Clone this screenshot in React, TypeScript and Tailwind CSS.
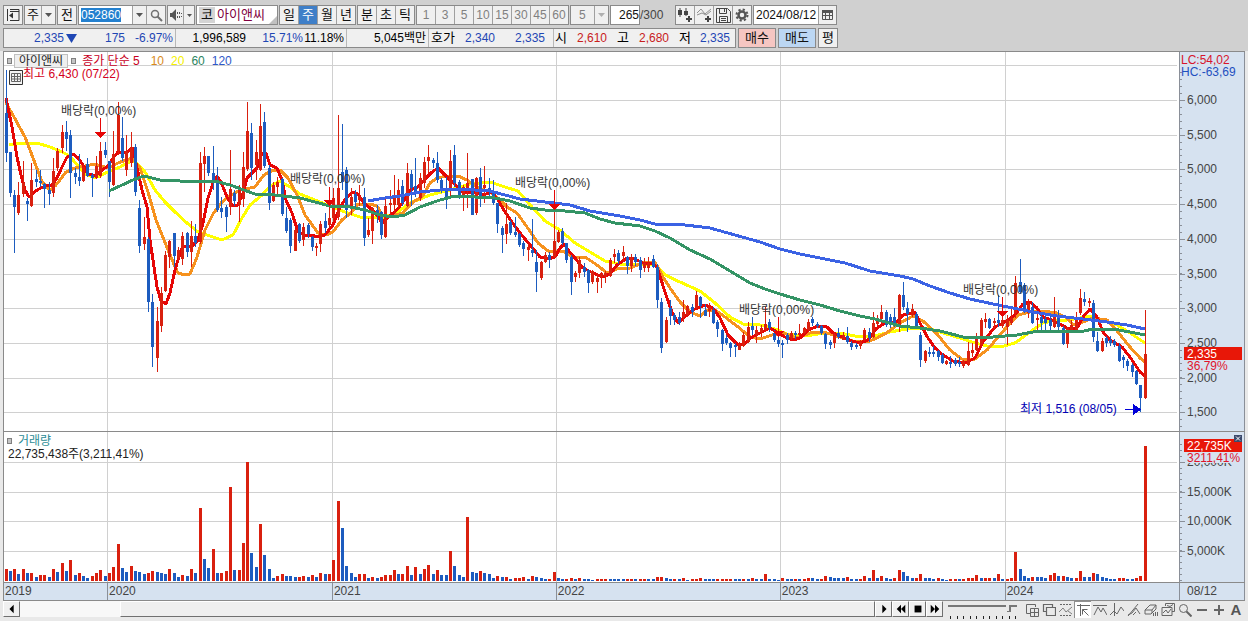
import type { ReactNode } from "react";
import clsx from "clsx";

const LEFT = 4;
const WIDTH = 1175;
const PITCH = 4.315;

const RED = "#d9200f";
const BLUE = "#1d5cbf";

const barX = (i: number) => Math.floor(5 + i * PITCH);
const pct = (x: number) => `${((x - LEFT) / WIDTH) * 100}%`;

// direction, high, body top, body bottom, low
const CANDLES = `
b70,113,153,162 b152,152,193,197 b190,195,207,253 r182,195,213,215 r161,183,194,197 b198,201,204,221 r163,180,206,207 b170,179,182,187
b170,181,183,187 b183,184,189,208 b182,190,194,205 r158,171,193,197 r148,151,168,171 r125,132,148,153 b121,132,139,151 b130,135,173,198
b168,173,177,184 b154,177,181,186 r165,167,181,182 b158,164,176,177 b173,175,178,197 r156,166,178,179 r142,151,176,178 b142,150,155,158
b161,161,182,197 r131,154,185,186 r102,115,151,155 b117,138,158,161 r135,151,170,176 r132,147,163,167 b144,147,192,196 b200,208,246,253
r217,237,244,250 b237,239,302,312 b294,302,347,367 r307,321,358,372 r287,293,326,332 r251,255,291,292 r240,241,257,268 b233,233,256,267
r247,250,258,261 r232,236,259,265 b232,233,252,257 r221,236,252,267 b224,236,243,247 r152,163,242,244 r147,156,164,192 b156,156,173,176
b146,173,182,190 b167,182,210,212 b197,208,212,218 b205,207,217,232 r150,189,207,215 b190,193,201,206 r185,187,205,222 r152,167,199,207
r102,131,169,171 b123,133,168,180 r140,152,165,180 r104,126,170,171 b112,122,166,168 b165,168,203,210 r182,185,201,202 r177,182,187,197
b178,179,214,216 b207,218,231,233 b218,220,246,253 r229,230,251,251 b223,224,241,243 r223,227,240,246 b223,225,234,238 b236,237,247,251
r243,246,248,256 r221,224,244,252 b213,221,228,233 r187,218,225,227 r188,198,218,222 r115,188,217,220 b124,172,182,190 b167,170,210,218
r188,197,209,215 b190,194,202,207 r185,197,200,206 b188,197,238,246 r218,230,235,237 r207,208,231,244 b205,210,215,223 b211,212,235,239
r197,206,237,238 r190,203,205,215 r175,195,205,213 r179,190,205,208 b180,186,203,206 r163,173,206,207 b170,174,188,206 b158,186,192,197
r173,178,198,201 r157,162,183,188 r145,157,161,173 b158,160,163,168 b152,163,180,183 b178,180,190,193 b177,190,197,209 r150,161,190,197
b145,155,183,187 b180,182,197,199 r185,187,198,211 r153,183,188,208 b179,179,215,215 r177,178,213,215 b168,177,197,207 r166,185,188,203
b178,188,192,197 b180,192,203,205 b203,203,224,233 b226,228,235,253 r203,224,234,244 b220,222,233,235 b217,232,235,237 b233,234,245,247
b241,243,249,256 r244,247,250,261 b219,250,253,257 b250,262,272,292 r261,262,278,280 r252,255,262,263 b252,255,260,268 r190,241,257,258
r230,232,242,243 b228,231,243,245 b243,243,260,263 b255,257,282,295 r271,273,277,282 r257,260,273,278 b263,267,272,277 b269,270,283,293
r270,271,282,284 r273,278,282,293 r272,273,277,288 r271,273,277,283 r258,260,276,277 r249,254,257,263 b250,253,261,264 r246,252,256,262
b256,257,266,274 r254,257,266,272 b254,257,262,266 b257,260,270,278 r258,263,268,272 r257,263,268,272 b255,259,267,268 b264,267,300,308
b298,302,348,353 r317,320,342,343 b300,308,316,325 b313,315,320,325 b312,317,323,325 r300,312,317,322 r305,306,315,317 b304,307,312,317
r291,295,308,309 b296,297,306,318 b304,310,316,316 r303,307,311,317 b307,310,323,324 b320,322,329,337 b329,330,344,351 b335,338,343,345
b342,343,348,357 b343,345,347,357 r342,344,350,350 r332,335,346,347 r322,327,342,343 b317,326,330,335 r326,330,335,343 r325,328,332,337
r307,324,330,332 b319,322,328,332 b330,333,340,342 b317,340,344,347 b340,343,345,358 b333,335,340,344 r331,333,338,340 b331,333,335,339
r324,333,335,337 r327,328,333,334 r319,322,330,331 b317,319,323,326 b322,324,326,328 b325,326,333,335 b333,334,344,349 b340,342,345,349
r333,334,343,348 b328,333,337,339 r332,335,340,340 b327,336,342,344 b341,343,347,350 b343,345,347,349 r340,342,346,349 r328,330,340,341
b328,332,338,342 r312,323,337,338 r315,319,324,326 r305,312,319,323 b310,312,325,327 b314,317,325,328 b308,317,326,327 r294,295,327,332
b282,295,307,310 b302,308,314,332 r304,309,315,317 b312,314,328,329 b332,335,360,367 r350,351,361,363 b347,352,354,357 b346,352,354,357
b350,351,357,361 b353,355,363,364 r360,361,364,365 b356,362,364,368 b358,360,364,366 b357,362,364,367 r360,361,366,368 r342,351,365,366
r343,350,353,357 r333,338,350,351 r318,320,345,347 r313,319,322,328 b318,319,328,329 r318,321,323,329 b295,320,323,327 r297,320,326,328
r315,320,327,345 r308,318,323,325 r276,283,313,318 b259,282,292,293 b283,285,312,313 r299,303,313,318 b302,307,323,324 r313,318,320,330
b315,317,323,333 b316,319,323,332 b316,320,326,332 r297,317,327,328 b310,315,327,330 b326,328,344,345 r327,328,344,348 r320,325,330,333
r312,320,330,333 r289,298,313,315 b292,299,302,306 r298,301,303,307 b300,303,337,342 b332,341,351,352 r338,341,351,352 b336,338,343,347
b336,340,343,346 b339,341,345,347 b343,346,361,362 b355,357,360,368 b359,361,366,371 b363,365,372,377 b370,371,384,385 b385,385,398,412
r310,354,398,399
`
  .trim()
  .split(/\s+/)
  .map((s) => {
    const [high, top, bottom, low] = s.slice(1).split(",").map(Number);
    return { up: s[0] === "r", high, top, bottom, low };
  });

const VOLUMES = `
r12 b10 r12 b7 r12 b8 r8 b4 r6 r6 b4 r12 b9 r18 b10 r21 b6 r8 b5 b3 r5 r8 r11 b5 r8 r14 r37 b13 b9 r15
b10 b9 b7 r8 r10 b9 b8 b7 r12 b8 b4 r6 b5 r12 b8 r73 b22 b13 r32 b8 r8 r10 r94 b11 r11 r38 r119 b28 b14 r57
b26 b12 b3 r5 r7 b5 b5 b4 r4 r5 b4 r6 b4 r8 b7 r7 r21 r80 b53 b15 b8 b4 r7 r7 b3 r4 b3 r4 r6 r6
r11 b7 r7 r15 b6 r14 b7 r12 r16 b7 r11 b6 b6 r30 b15 b6 b4 r64 b9 b8 r10 b8 b7 b3 r5 b4 r4 b2 r3 r3
r4 b2 r5 b4 b3 b2 r2 r9 b3 b2 r2 r3 b2 r3 b2 b2 b1 r2 r2 r2 b2 b2 b2 b2 r2 r2 b2 r2 r2 b2
b2 r4 r4 b3 b2 r2 b2 r3 b1 r2 r2 r3 b2 b2 b2 r2 r2 r2 r2 b2 b2 r2 b2 r3 b2 b2 r7 b2 b2 b1
r3 b2 b2 r2 b2 r2 r3 b3 b2 r2 r5 b4 b3 b3 b3 r4 b2 b2 r2 r5 b3 r11 b3 r5 b3 b2 r3 r11 b9 b5
b3 r3 r7 b3 b3 b2 r3 b2 b1 r2 r2 b2 r2 r3 r3 r6 b3 r3 r3 b3 r7 b2 r2 r3 r29 b12 b5 b3 r4 b4
b4 b3 r6 r8 b5 r5 b4 b3 r3 r10 b4 b4 r8 b7 b4 b3 b2 b2 r3 r3 b2 b2 r3 r5 r135
`
  .trim()
  .split(/\s+/)
  .map((s) => ({ up: s[0] === "r", h: Number(s.slice(1)) }));

const AVERAGES = [
  {
    color: "#ffff00",
    points:
      "9,145 20,143 37,143 50,147 62,152 70,156 78,166 85,174 95,178 108,172 120,167 133,160 145,172 155,190 165,202 175,212 187,223 198,232 210,236 222,240 233,235 242,218 250,205 262,195 270,186 280,181 290,187 300,194 315,200 330,206 345,212 360,217 380,218 395,214 410,203 430,195 450,190 470,184 490,182 505,187 518,191 530,205 545,221 560,230 575,243 590,252 605,261 620,264 640,264 655,265 667,276 680,282 700,291 715,303 730,317 743,324 760,325 775,329 787,334 805,336 825,333 840,333 855,336 870,337 890,332 912,328 927,328 943,333 960,338 975,343 987,346 1000,347 1015,343 1030,332 1043,323 1057,320 1067,320 1080,318 1090,316 1103,320 1117,325 1130,333 1145,343",
  },
  {
    color: "#f6921e",
    points:
      "6,103 14,117 25,137 33,158 42,182 50,190 56,185 66,172 75,168 85,166 95,164 108,168 118,163 132,158 140,168 148,192 156,220 166,245 173,262 178,273 185,275 190,274 197,257 205,230 213,214 222,202 230,196 240,190 255,187 264,175 273,170 280,170 288,178 297,195 305,215 318,233 326,235 333,232 342,220 352,212 358,204 370,204 377,206 382,215 388,217 403,213 413,202 422,197 430,183 437,178 447,176 458,176 467,180 477,187 490,192 498,198 507,207 517,213 527,227 538,243 548,251 563,251 573,257 585,257 597,265 607,273 617,269 630,268 643,263 655,262 663,277 670,288 680,302 690,312 700,316 707,310 715,310 725,317 737,326 750,337 760,339 772,335 783,333 797,338 810,333 823,332 840,337 853,341 867,342 877,338 888,332 900,323 913,316 923,321 937,334 950,350 962,359 975,359 987,350 1000,335 1010,323 1018,315 1030,312 1043,311 1057,313 1067,318 1073,325 1083,322 1093,318 1107,320 1118,332 1130,347 1140,358 1145,362",
  },
  {
    color: "#e60606",
    points:
      "6,98 12,127 17,157 21,175 25,190 29,197 37,190 45,186 52,185 57,178 62,167 67,157 73,154 78,158 83,165 88,174 95,176 102,170 108,166 113,158 118,152 125,153 133,148 137,168 142,190 147,207 150,240 153,260 157,287 161,301 166,304 170,293 175,270 180,253 183,246 192,246 198,240 203,223 208,198 213,183 217,176 221,182 227,197 232,205 238,205 243,193 247,178 252,173 257,168 262,153 266,153 270,165 277,168 282,180 286,200 292,213 298,232 305,235 312,235 317,237 325,235 333,225 340,207 347,197 353,192 358,194 363,202 370,208 377,215 382,223 388,217 397,210 403,202 410,190 418,187 425,179 432,172 438,168 443,173 450,180 458,187 463,192 473,192 483,195 492,192 498,200 505,212 512,222 520,233 530,245 540,257 548,259 555,257 560,248 564,244 568,250 575,258 583,268 593,273 603,277 610,274 617,265 627,258 635,259 643,263 652,264 657,267 665,292 672,312 678,323 687,315 695,309 705,305 713,308 720,318 728,335 737,344 743,345 752,337 762,332 770,328 777,332 785,337 793,340 800,338 808,330 818,326 827,327 833,333 842,337 852,341 860,343 868,340 877,328 885,323 897,322 903,315 915,312 920,323 928,338 935,348 943,355 953,361 965,363 975,358 983,342 995,327 1005,322 1015,315 1023,304 1030,302 1037,308 1043,317 1052,320 1058,323 1067,328 1077,328 1083,317 1090,309 1097,317 1103,332 1110,340 1122,347 1130,357 1140,372 1145,376",
  },
  {
    color: "#349465",
    points:
      "109,191 120,186 133,180 144,176 160,180 180,181 200,182 215,181 230,185 255,194 275,195 300,198 315,202 330,206 350,207 365,210 380,215 393,217 405,215 420,207 440,200 455,196 475,197 495,198 510,201 530,208 545,210 565,211 585,213 600,219 615,223 640,226 655,231 670,238 690,250 710,259 730,271 750,283 765,289 780,294 800,300 820,305 840,311 860,316 875,319 900,326 920,328 940,331 967,338 993,337 1017,335 1033,332 1060,331 1080,332 1093,329 1113,329 1130,332 1145,335",
  },
  {
    color: "#3b62e4",
    points:
      "368,201 385,198 400,196 420,192 440,190 455,189 475,190 490,191 505,195 520,199 545,202 570,205 590,211 620,216 640,220 655,224 685,225 710,228 735,235 760,242 780,249 800,254 820,258 845,263 870,271 900,276 913,279 930,286 950,293 970,299 993,304 1013,308 1033,312 1057,316 1083,319 1107,322 1127,325 1145,329",
  },
];

const YEAR_LINES = [107, 332, 556, 780, 1005];
const PRICE_LINES = [65, 100, 135, 169, 204, 239, 274, 308, 343, 378, 412];
const VOLUME_LINES = [462, 492, 521, 551];

const EX_DIVIDENDS = [
  { x: 61, y: 111, mark: 100, from: 118, tip: 138 },
  { x: 290, y: 179, mark: 329, from: 187, tip: 206 },
  { x: 515, y: 183, mark: 554, from: 190, tip: 210 },
  { x: 739, y: 310, mark: 778, from: 317, tip: 337 },
  { x: 963, y: 290, mark: 1002, from: 297, tip: 317 },
];

const YEARS = [
  { label: "2019", span: 103 },
  { label: "2020", span: 225 },
  { label: "2021", span: 224 },
  { label: "2022", span: 224 },
  { label: "2023", span: 225 },
  { label: "2024", span: 174 },
];

function Group({ children, className }: { children: ReactNode; className?: string }) {
  return (
    <div
      className={clsx(
        "flex h-5 shrink-0 divide-x divide-[#a0a0a0] border border-[#8a8a8a] bg-[#f0f0f0]",
        className,
      )}
    >
      {children}
    </div>
  );
}

function ToolButton({
  children,
  label,
  active,
  muted,
}: {
  children: ReactNode;
  label?: string;
  active?: boolean;
  muted?: boolean;
}) {
  return (
    <button
      type="button"
      aria-label={label}
      className={clsx(
        "flex min-w-0 flex-1 items-center justify-center",
        active && "bg-[#3f7fc8] text-white",
        muted && "text-[#808080]",
      )}
    >
      {children}
    </button>
  );
}

function Caret({ className = "fill-[#555]" }: { className?: string }) {
  return (
    <svg width="7" height="4" viewBox="0 0 7 4" className={className}>
      <path d="M0 0h7L3.500 4z" />
    </svg>
  );
}

function DropDown({ label, value, muted, className }: { label: string; value: string; muted?: boolean; className: string }) {
  return (
    <div className={clsx("relative flex h-5 shrink-0 border border-[#8a8a8a] bg-[#f0f0f0]", className)}>
      <select
        aria-label={label}
        className={clsx("w-full appearance-none", muted ? "pl-2 text-[#808080]" : "pl-[2px] text-[13px]")}
      >
        <option>{value}</option>
      </select>
      <span className="pointer-events-none absolute inset-y-0 right-0 flex w-[14px] items-center justify-center border-l border-[#a0a0a0]">
        <Caret className={muted ? "fill-[#b0b0b0]" : "fill-[#555]"} />
      </span>
    </div>
  );
}

function Toolbar() {
  return (
    <div className="flex gap-px">
      <Group className="w-5">
        <ToolButton label="창 열기">
          <svg width="14" height="14" viewBox="0 0 14 14" fill="none" stroke="#333">
            <path d="M4 1.500h9v11H4M1.500 1v12M4 3.500h9" />
            <path d="M7 4.500v6L3 7.500z" fill="#333" stroke="none" />
          </svg>
        </ToolButton>
      </Group>
      <DropDown label="주기" value="주" className="w-8" />
      <Group className="w-5 text-[13px]">
        <ToolButton>전</ToolButton>
      </Group>
      <Group className="w-[88px]">
        <div className="w-[54px] shrink-0 bg-white p-[2px]">
          <input
            aria-label="종목코드"
            defaultValue="052860"
            className="block h-[14px] w-10 bg-[#2380cf] text-white outline-none"
          />
        </div>
        <ToolButton label="종목 목록">
          <Caret />
        </ToolButton>
        <div className="flex w-[18px]">
          <ToolButton label="종목 검색">
            <svg width="13" height="13" viewBox="0 0 13 13" fill="none" stroke="#707070">
              <circle cx="5" cy="5" r="3.500" strokeWidth="1.500" />
              <path d="M7.500 7.500l4.500 4.500" strokeWidth="2" />
            </svg>
          </ToolButton>
        </div>
      </Group>
      <Group className="w-7">
        <ToolButton label="소리">
          <svg width="14" height="12" viewBox="0 0 14 12" fill="#555">
            <path d="M1 4h2l4-4v12L3 8H1z" />
            <path d="M8 3h1v2H8zM8 7h1v2H8zM10 3h1v2h-1zM10 7h1v2h-1zM12 4h1v1h-1zM12 7h1v1h-1z" />
          </svg>
        </ToolButton>
        <div className="flex w-[10px]">
          <ToolButton label="소리 설정">
            <svg width="5" height="3" viewBox="0 0 5 3" fill="#555">
              <path d="M0 0h5L2.500 3z" />
            </svg>
          </ToolButton>
        </div>
      </Group>
      <div className="relative flex h-5 w-[82px] shrink-0 items-center border border-[#8a8a8a] bg-white text-[13px]">
        <span className="mx-[2px] flex h-4 w-4 items-center justify-center bg-[#d4d4d4]">코</span>
        <span className="text-[#800040]">아이앤씨</span>
        <svg width="8" height="8" viewBox="0 0 8 8" className="absolute right-0 bottom-0 fill-[#c0c0c0]">
          <path d="M8 0v8H0z" />
        </svg>
      </div>
      <Group className="w-[77px] text-[13px]">
        <ToolButton>일</ToolButton>
        <ToolButton active>주</ToolButton>
        <ToolButton>월</ToolButton>
        <ToolButton>년</ToolButton>
      </Group>
      <Group className="w-[58px] text-[13px]">
        <ToolButton>분</ToolButton>
        <ToolButton>초</ToolButton>
        <ToolButton>틱</ToolButton>
      </Group>
      <Group className="w-[153px]">
        {["1", "3", "5", "10", "15", "30", "45", "60"].map((n) => (
          <ToolButton key={n} muted>
            {n}
          </ToolButton>
        ))}
      </Group>
      <DropDown label="분 단위" value="5" muted className="w-[39px]" />
      <label className="flex items-center">
        <input
          aria-label="조회 개수"
          defaultValue="265"
          className="h-5 w-[30px] border border-[#8a8a8a] bg-white text-right outline-none"
        />
        <span className="w-[34px] text-[#444]">/300</span>
      </label>
      <Group className="w-[77px]">
        <ToolButton label="차트 유형 추가">
          <svg width="15" height="14" viewBox="0 0 15 14" fill="#444">
            <path d="M0 2h4v5H0zM1.500 0h1v9h-1zM6 3h4v4H6zM7.500 0h1v8h-1zM10 8h2v2h2v2h-2v2h-2v-2H8v-2h2z" />
          </svg>
        </ToolButton>
        <ToolButton label="지표 추가">
          <svg width="15" height="14" viewBox="0 0 15 14">
            <path d="M0 5l4-4 4 5 6-5M0 7l5-2 4 2 5-4" fill="none" stroke="#777" strokeWidth=".8" />
            <path d="M10 8h2v2h2v2h-2v2h-2v-2H8v-2h2z" fill="#444" />
          </svg>
        </ToolButton>
        <ToolButton label="저장">
          <svg width="15" height="15" viewBox="0 0 15 15" fill="none" stroke="#444">
            <path d="M.5.5h11l3 3v11H.5zM3.500.5v5h7v-5M8.500 1v3M3.500 14.500v-6h8v6M5 10.500h5M5 12.500h5" />
          </svg>
        </ToolButton>
        <ToolButton label="설정">
          <svg width="14" height="14" viewBox="0 0 14 14" fill="none" stroke="#555">
            <circle cx="7" cy="7" r="3.500" strokeWidth="2.500" />
            <circle cx="7" cy="7" r="5.500" strokeWidth="2" strokeDasharray="2.200 2.120" />
          </svg>
        </ToolButton>
      </Group>
      <div className="flex h-5 shrink-0 border border-[#8a8a8a] bg-[#f0f0f0]">
        <input aria-label="날짜" defaultValue="2024/08/12" className="w-16 bg-white pl-[2px] outline-none" />
        <div className="flex w-[18px] border-l border-[#a0a0a0]">
          <ToolButton label="달력">
            <svg width="11" height="10" viewBox="0 0 11 10" fill="none" stroke="#555">
              <path d="M.5 1.500h10v8H.5zM.5 5.500h10M3.500 3v6.500M7.500 3v6.500" />
              <path d="M0 0h11v3H0z" fill="#555" stroke="none" />
            </svg>
          </ToolButton>
        </div>
      </div>
    </div>
  );
}

function QuoteBar() {
  return (
    <div className="flex gap-[2px]">
      <div className="flex h-5 w-[733px] shrink-0 items-center border border-[#8a8a8a] bg-[#f0f0f0] text-right whitespace-nowrap text-black">
        <span className="w-[60px] text-[#1f47b4]">2,335</span>
        <svg width="11" height="9" viewBox="0 0 11 9" className="ml-[2px] fill-[#1f47b4]">
          <path d="M0 0h11L5.500 9z" />
        </svg>
        <span className="w-12 text-[#1f47b4]">175</span>
        <span className="w-12 text-[#1f47b4]">-6.97%</span>
        <span className="ml-[2px] h-full border-l border-[#b8b8b8]" />
        <span className="w-[70px]">1,996,589</span>
        <span className="w-[57px] text-[#1f47b4]">15.71%</span>
        <span className="w-[41px]">11.18%</span>
        <span className="ml-[2px] h-full border-l border-[#b8b8b8]" />
        <span className="w-[79px]">5,045백만</span>
        <span className="ml-[2px] h-full border-l border-[#b8b8b8]" />
        <span className="w-[26px] text-[13px]">호가</span>
        <span className="w-10 text-[#1f47b4]">2,340</span>
        <span className="w-[50px] text-[#1f47b4]">2,335</span>
        <span className="ml-2 h-full border-l border-[#b8b8b8]" />
        <span className="w-[13px] text-[13px]">시</span>
        <span className="w-10 text-[#c8201c]">2,610</span>
        <span className="w-[22px] text-[13px]">고</span>
        <span className="w-10 text-[#c8201c]">2,680</span>
        <span className="w-[22px] text-[13px]">저</span>
        <span className="w-[39px] text-[#1f47b4]">2,335</span>
      </div>
      <button type="button" className="h-5 w-[38px] border border-[#8a8a8a] bg-[#f6c6c2] text-[13px]">
        매수
      </button>
      <button type="button" className="h-5 w-[38px] border border-[#8a8a8a] bg-[#bcd7f3] text-[13px]">
        매도
      </button>
      <button type="button" className="h-5 w-5 border border-[#8a8a8a] bg-[#f0f0f0] text-[13px]">
        평
      </button>
    </div>
  );
}

function Marker() {
  return <span className="h-[6px] w-[5px] border border-[#808080] bg-[#c4c4c4]" />;
}

function PricePanel() {
  return (
    <div className="relative">
      <svg
        viewBox="4 52 1175 379"
        preserveAspectRatio="none"
        className="block h-[379px] w-full"
        shapeRendering="crispEdges"
      >
        <g fill="#d0d0d0">
          {PRICE_LINES.map((y) => (
            <rect key={y} x={LEFT} y={y} width={WIDTH - 2} height="1" />
          ))}
          {YEAR_LINES.map((x) => (
            <rect key={x} x={x} y="52" width="1" height="379" />
          ))}
        </g>
        {AVERAGES.slice(0, 3).map((a) => (
          <polyline key={a.color} points={a.points} fill="none" stroke={a.color} strokeWidth="3" strokeLinejoin="round" />
        ))}
        {CANDLES.map((c, i) => (
          <g key={i} fill={c.up ? RED : BLUE}>
            <rect x={barX(i) + 1} y={c.high} width="1" height={c.low - c.high} />
            <rect x={barX(i)} y={c.top} width="3" height={c.bottom - c.top} />
          </g>
        ))}
        {AVERAGES.slice(3).map((a) => (
          <polyline key={a.color} points={a.points} fill="none" stroke={a.color} strokeWidth="3" strokeLinejoin="round" />
        ))}
        {EX_DIVIDENDS.map((d) => (
          <g key={d.x} fill="#e60606">
            <rect x={d.mark} y={d.from} width="1" height={d.tip - d.from} />
            <path d={`M${d.mark - 5} ${d.tip - 6}h11l-5.500 6z`} />
          </g>
        ))}
        <path d="M8 74l4-4v3h10v2H12v3z" fill="#d40020" />
        <path d="M1125 409h8v-5l8 5.500-8 5.500v-5h-8z" fill="#0000d8" />
      </svg>

      <div className="absolute top-[2px] left-[3px] flex items-center whitespace-nowrap">
        <Marker />
        <span className="ml-[2px] h-[14px] border border-[#c0c0c0] bg-[#efefef] px-1 leading-3 text-[#222]">아이앤씨</span>
        <span className="ml-[3px] flex">
          <Marker />
        </span>
        <span className="ml-[6px] text-[#c8001e]">종가 단순 5</span>
        <span className="ml-[11px] text-[#d98a1c]">10</span>
        <span className="ml-[7px] text-[#f4f000]">20</span>
        <span className="ml-[7px] text-[#2c8460]">60</span>
        <span className="ml-[7px] text-[#3058c8]">120</span>
      </div>
      <span className="absolute top-[15px] left-[19px] text-[#d40020]">최고 6,430 (07/22)</span>
      <svg width="14" height="15" viewBox="0 0 14 15" className="absolute top-[18px] left-[5px]">
        <path d="M.5.5h13v14H.5z" fill="#f4f4f4" stroke="#333" />
        <path d="M2.500 3.500h9v8h-9zM2.500 6.500h9M2.500 9h9M5.500 3.500v8M8.500 3.500v8" fill="none" stroke="#666" />
      </svg>
      {EX_DIVIDENDS.map((d) => (
        <span
          key={d.x}
          className="absolute -translate-y-1/2 whitespace-nowrap text-[#333]"
          style={{ left: pct(d.x), top: d.y - 52 }}
        >
          배당락(0,00%)
        </span>
      ))}
      <span
        className="absolute -translate-y-1/2 whitespace-nowrap text-[#0000b4]"
        style={{ left: pct(1020), top: 409 - 52 }}
      >
        최저 1,516 (08/05)
      </span>
    </div>
  );
}

function VolumePanel() {
  return (
    <div className="relative">
      <svg
        viewBox="4 432 1175 150"
        preserveAspectRatio="none"
        className="block h-[150px] w-full"
        shapeRendering="crispEdges"
      >
        <g fill="#d0d0d0">
          {VOLUME_LINES.map((y) => (
            <rect key={y} x={LEFT} y={y} width={WIDTH - 2} height="1" />
          ))}
          {YEAR_LINES.map((x) => (
            <rect key={x} x={x} y="432" width="1" height="150" />
          ))}
        </g>
        {VOLUMES.map((v, i) => (
          <rect key={i} x={barX(i)} y={581 - v.h} width="3" height={v.h} fill={v.up ? RED : BLUE} />
        ))}
      </svg>
      <div className="absolute top-[2px] left-[3px] flex items-center gap-[6px] text-[#2b8c96]">
        <Marker />
        거래량
      </div>
      <span className="absolute top-[15px] left-1 text-[#222]">22,735,438주(3,211,41%)</span>
    </div>
  );
}

const priceTicks = Array.from({ length: 52 }, (_, i) => Math.round(72.3 + i * 6.933));
const volumeTicks = Array.from({ length: 24 }, (_, i) => Math.round(580 - i * 5.920));

function PriceAxis() {
  const labels = ["6,000", "5,500", "5,000", "4,500", "4,000", "3,500", "3,000", "2,500", "2,000", "1,500"];
  return (
    <svg width="66" height="379" viewBox="1179 52 66 379" className="block bg-[#d6e2f0]">
      <g fill="#8a8f98" shapeRendering="crispEdges">
        <rect x="1179" y="52" width="1" height="379" />
        <rect x="1244" y="52" width="1" height="379" />
        {priceTicks.map((y) => (
          <rect key={y} x="1180" y={y} width="2" height="1" />
        ))}
        {PRICE_LINES.slice(1).map((y) => (
          <rect key={y} x="1180" y={y} width="5" height="1" />
        ))}
      </g>
      <g className="fill-[#444]">
        {labels.map((l, i) => (
          <text key={l} x="1187" y={PRICE_LINES[i + 1] + 4}>
            {l}
          </text>
        ))}
      </g>
      <text x="1181" y="64" className="fill-[#d8142c]">
        LC:54,02
      </text>
      <text x="1181" y="76" className="fill-[#1f50c0]">
        HC:-63,69
      </text>
      <rect x="1184" y="347" width="58" height="13" fill="#e81708" />
      <text x="1187" y="358" className="fill-white">
        2,335
      </text>
      <text x="1187" y="370" className="fill-[#e0142c]">
        36,79%
      </text>
    </svg>
  );
}

function VolumeAxis() {
  return (
    <svg width="66" height="150" viewBox="1179 432 66 150" className="block bg-[#d6e2f0]">
      <g fill="#8a8f98" shapeRendering="crispEdges">
        <rect x="1179" y="432" width="1" height="150" />
        <rect x="1244" y="432" width="1" height="150" />
        {volumeTicks.map((y) => (
          <rect key={y} x="1180" y={y} width="2" height="1" />
        ))}
        {VOLUME_LINES.map((y) => (
          <rect key={y} x="1180" y={y} width="5" height="1" />
        ))}
      </g>
      <g className="fill-[#444]">
        <text x="1187" y="466">20,000K</text>
        <text x="1187" y="496">15,000K</text>
        <text x="1187" y="525">10,000K</text>
        <text x="1187" y="555">5,000K</text>
      </g>
      <rect x="1184" y="439" width="58" height="13" fill="#e81708" />
      <rect x="1186" y="452" width="56" height="11" fill="#d6e2f0" />
      <text x="1187" y="450" className="fill-white">
        22,735K
      </text>
      <text x="1187" y="462" className="fill-[#e0142c]">
        3211,41%
      </text>
      <rect x="1234" y="435" width="8" height="7" fill="#3c4a6c" />
      <path d="M1236 436.500l4 4M1240 436.500l-4 4" stroke="#fff" />
    </svg>
  );
}

function DateAxis() {
  return (
    <div className="flex h-[17px] bg-[#d6e2f0] leading-4 text-[#444]">
      {YEARS.map((y, i) => (
        <span
          key={y.label}
          className={clsx("min-w-0 basis-0 pl-px", i > 0 && "border-l border-[#8a8f98]")}
          style={{ flexGrow: y.span }}
        >
          {y.label}
        </span>
      ))}
    </div>
  );
}

const BOTTOM_TOOLS = [
  {
    label: "창 추가",
    icon: <path d="M10.500 4V1.500h-9v9H5M5.500 5.500h8v8h-8zM9.500 5.500v8M5.500 9.500h8" />,
  },
  { label: "창 겹치기", icon: <path d="M10.500 4V1.500h-9v7H4M4.500 4.500h9v8h-9z" strokeWidth="1.200" /> },
  {
    label: "지표선",
    icon: (
      <>
        <path d="M1 12.500h12M1 1.500h12" strokeDasharray="2 1" />
        <path d="M0 9l4-4 3 4 6-5M9 8l4 3" strokeWidth=".8" />
      </>
    ),
  },
  {
    label: "십자선",
    active: true,
    icon: <path d="M1 2.500h13M4.500 1v12M6.500 6.500h5M6.500 6.500l6 6M6.500 6.500v5" />,
  },
  { label: "수평선", icon: <path d="M0 2.500h14M1 12l4-8 3 5 2-4 4 7" /> },
  { label: "수직선", icon: <path d="M4.500 0v13M0 12l4-4 3 3 4-7 3 4" /> },
  { label: "추세선", icon: <path d="M1 13L11 1M1 12l4-2 4-5 4 6M6 12l3-3" /> },
  {
    label: "지우개",
    icon: <path d="M1 7l5-5h6L8 7zM1 7v4h6l5-5V2M8 7v3M9.500 10v3M11.500 9v4M13.500 9v4" />,
  },
  {
    label: "차트 복사",
    icon: <path d="M4.500 3V.5h9v8H11M1 4.500h10v8H1zM2 10l3-3 2 3 3-4M6 2.500l3 1 3-2" />,
  },
  {
    label: "확대경",
    icon: (
      <>
        <circle cx="5.500" cy="5.500" r="4" />
        <path d="M8.500 8.500l5 5" strokeWidth="2" />
      </>
    ),
  },
  { label: "축소", icon: <path d="M2 7h10" strokeWidth="2" /> },
  { label: "확대", icon: <path d="M2 7h10M7 2v10" strokeWidth="2" /> },
];

const PLAYBACK = [
  { label: "다음", d: "M5 2l5 5-5 5z" },
  { label: "되감기", d: "M7 2v10L2 7zM12 2v10L7 7z" },
  { label: "정지", d: "M3 3h8v8H3z" },
  { label: "빨리 감기", d: "M2 2l5 5-5 5zM7 2l5 5-5 5z" },
];

function ScrollButton({ label, d }: { label: string; d: string }) {
  return (
    <button
      type="button"
      aria-label={label}
      className="flex h-4 w-[17px] shrink-0 items-center justify-center border border-t-white border-r-[#707070] border-b-[#707070] border-l-white bg-[#f0f0f0]"
    >
      <svg width="12" height="12" viewBox="0 0 14 14">
        <path d={d} />
      </svg>
    </button>
  );
}

function BottomBar() {
  return (
    <div className="flex h-5 items-start">
      <ScrollButton label="왼쪽" d="M9 2v10L4 7z" />
      <div className="flex h-4 min-w-0 flex-1 bg-[#f8f8f8]">
        <div className="ml-[100px] flex-1 border border-t-white border-r-[#707070] border-b-[#707070] border-l-white bg-[#efefef]" />
      </div>
      {PLAYBACK.map((p) => (
        <ScrollButton key={p.label} label={p.label} d={p.d} />
      ))}
      <div className="relative ml-1 h-4 w-[72px] shrink-0">
        <input
          type="range"
          aria-label="재생 속도"
          defaultValue="90"
          className="absolute inset-0 h-4 w-full appearance-none opacity-0"
        />
        <svg width="72" height="18" viewBox="0 0 72 18" shapeRendering="crispEdges" className="pointer-events-none">
          <path d="M1 4h58v2H1zM60 11h4V6h6V4h-8v6h-2z" fill="#777" />
          {Array.from({ length: 11 }, (_, i) => (
            <rect key={i} x={Math.round(3 + i * 6.500)} y="15" width="1" height="3" fill="#222" />
          ))}
        </svg>
      </div>
      <div className="ml-1 flex shrink-0">
        {BOTTOM_TOOLS.map((t) => (
          <button
            key={t.label}
            type="button"
            aria-label={t.label}
            className={clsx(
              "flex h-[17px] w-[17px] items-center justify-center",
              t.active && "border-t border-l border-[#909090] bg-white",
            )}
          >
            <svg width="14" height="14" viewBox="0 0 14 14" fill="none" stroke="#666">
              {t.icon}
            </svg>
          </button>
        ))}
        <button type="button" className="w-[18px] text-[15px] leading-4 font-bold text-[#555]">
          A
        </button>
      </div>
    </div>
  );
}

export default function App() {
  return (
    <div className="min-h-screen bg-[#e9e9e9] font-['Liberation_Sans','Noto_Sans_CJK_KR',sans-serif] text-[12px] leading-[14px] text-[#111]">
      <header className="flex h-[51px] flex-col gap-[3px] bg-[#d0d0d0] px-[3px] pt-[5px]">
        <Toolbar />
        <QuoteBar />
      </header>
      <main className="mx-[3px]">
        <div className="grid grid-cols-[minmax(0,1fr)_66px] border-t border-l border-[#8a8a8a] bg-white">
          <PricePanel />
          <PriceAxis />
          <div className="col-span-2 h-px bg-[#8a8a8a]" />
          <VolumePanel />
          <VolumeAxis />
          <div className="col-span-2 h-px bg-[#8a8a8a]" />
          <DateAxis />
          <div className="border-x border-[#8a8f98] bg-[#d6e2f0] pl-[7px] leading-4 text-[#444]">08/12</div>
          <div className="col-span-2 h-px bg-[#8a8a8a]" />
        </div>
        <BottomBar />
      </main>
    </div>
  );
}
